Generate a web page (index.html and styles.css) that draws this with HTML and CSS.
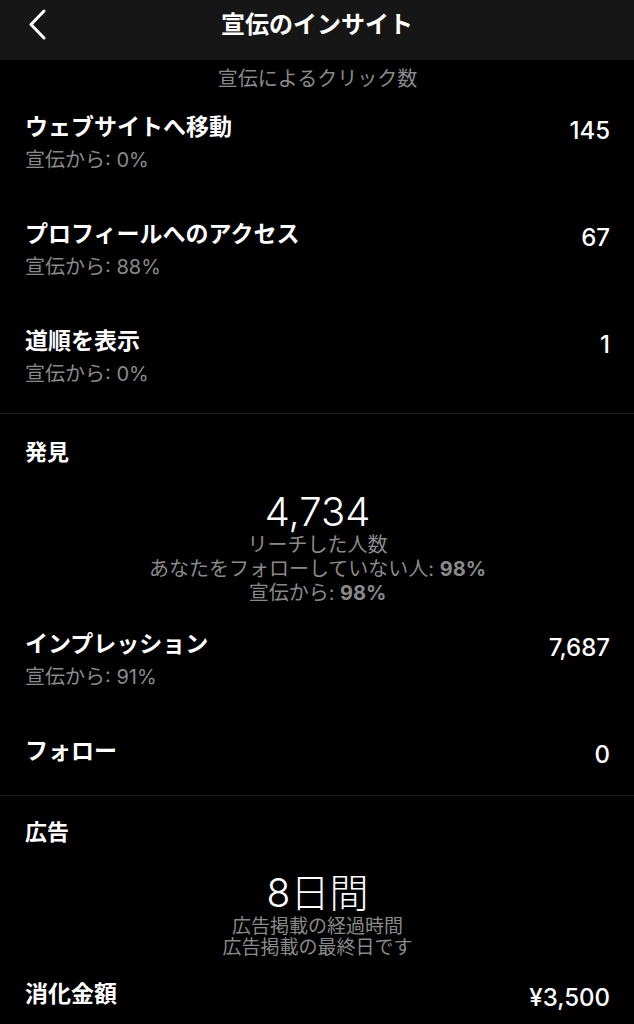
FILE: index.html
```html
<!DOCTYPE html>
<html lang="ja">
<head>
    <meta charset="UTF-8">
    <meta name="viewport" content="width=device-width, initial-scale=1.0">
    <title>宣伝のインサイト</title>
    <link rel="stylesheet" href="styles.css">
</head>
<body>
    <header class="topbar">
        <svg class="back" width="20" height="32" viewBox="0 0 20 32">
            <polyline points="16,3 3,16.5 16,30" fill="none" stroke="#fff" stroke-width="3" stroke-linecap="round" stroke-linejoin="round"/>
        </svg>
        <h1>宣伝のインサイト</h1>
    </header>

    <section class="block clicks">
        <div class="caption">宣伝によるクリック数</div>
        <div class="row">
            <div class="row-text">
                <div class="row-title">ウェブサイトへ移動</div>
                <div class="row-sub">宣伝から: 0%</div>
            </div>
            <div class="row-value">145</div>
        </div>
        <div class="row">
            <div class="row-text">
                <div class="row-title">プロフィールへのアクセス</div>
                <div class="row-sub">宣伝から: 88%</div>
            </div>
            <div class="row-value">67</div>
        </div>
        <div class="row">
            <div class="row-text">
                <div class="row-title">道順を表示</div>
                <div class="row-sub">宣伝から: 0%</div>
            </div>
            <div class="row-value">1</div>
        </div>
    </section>

    <section class="block">
        <h2>発見</h2>
        <div class="stat">
            <div class="stat-big">4,734</div>
            <div class="stat-line">リーチした人数</div>
            <div class="stat-line">あなたをフォローしていない人: <b>98%</b></div>
            <div class="stat-line">宣伝から: <b>98%</b></div>
        </div>
        <div class="row first">
            <div class="row-text">
                <div class="row-title">インプレッション</div>
                <div class="row-sub">宣伝から: 91%</div>
            </div>
            <div class="row-value">7,687</div>
        </div>
        <div class="row single">
            <div class="row-text">
                <div class="row-title">フォロー</div>
            </div>
            <div class="row-value">0</div>
        </div>
    </section>

    <section class="block">
        <h2 class="ads-head">広告</h2>
        <div class="stat ads">
            <div class="stat-big">8日間</div>
            <div class="stat-line">広告掲載の経過時間</div>
            <div class="stat-line">広告掲載の最終日です</div>
        </div>
        <div class="row single">
            <div class="row-text">
                <div class="row-title">消化金額</div>
            </div>
            <div class="row-value">¥3,500</div>
        </div>
    </section>
</body>
</html>
```

FILE: styles.css
```css
body {
    margin: 0;
    background: #000;
    color: #fff;
    font-family: Inter, "Noto Sans CJK JP", sans-serif;
    height: 1024px;
    overflow: hidden;
}
.topbar {
    height: 60px;
    background: #161616;
    display: flex;
    align-items: center;
    justify-content: center;
    position: relative;
}
.back {
    position: absolute;
    left: 28px;
    top: 8px;
}
.topbar h1 {
    margin: 0;
    font-size: 24px;
    font-weight: 700;
    line-height: 30px;
    margin-top: -10px;
}
.block {
    padding: 0 24px 0 25px;
    border-bottom: 1px solid #1c1c1c;
}
.clicks {
    padding-top: 7px;
    padding-bottom: 27px;
}
.caption {
    text-align: center;
    color: #8a8a8a;
    font-size: 20px;
    line-height: 24px;
}
.row {
    display: flex;
    justify-content: space-between;
    align-items: flex-start;
    padding-top: 22px;
    padding-bottom: 26px;
}
.clicks .row:last-child {
    padding-bottom: 0;
}
.row-title {
    font-size: 23px;
    font-weight: 700;
    line-height: 28px;
}
.row-sub {
    margin-top: 7px;
    color: #8a8a8a;
    font-size: 20px;
    line-height: 24px;
}
.row-value {
    font-size: 24px;
    line-height: 28px;
    font-weight: 500;
    padding-top: 4px;
}
h2 {
    margin: 0;
    padding-top: 24px;
    font-size: 22px;
    font-weight: 700;
    line-height: 28px;
}
.ads-head {
    padding-top: 22px;
}
.stat {
    text-align: center;
    margin-top: 24px;
    color: #8a8a8a;
}
.stat-big {
    color: #fff;
    font-size: 40px;
    font-weight: 300;
    line-height: 44px;
    margin-bottom: -1px;
}
.stat-line {
    font-size: 20px;
    line-height: 24px;
}
.stat-line b {
    font-weight: 700;
}
.row.first {
    padding-top: 25px;
}
.ads {
    margin-top: 25px;
}
.ads .stat-big {
    font-size: 39px;
    margin-bottom: 1px;
}
.ads .stat-line {
    font-size: 19px;
    line-height: 21px;
}
.row.single {
    padding-bottom: 26px;
}
.ads + .row {
    padding-top: 22px;
}
```
